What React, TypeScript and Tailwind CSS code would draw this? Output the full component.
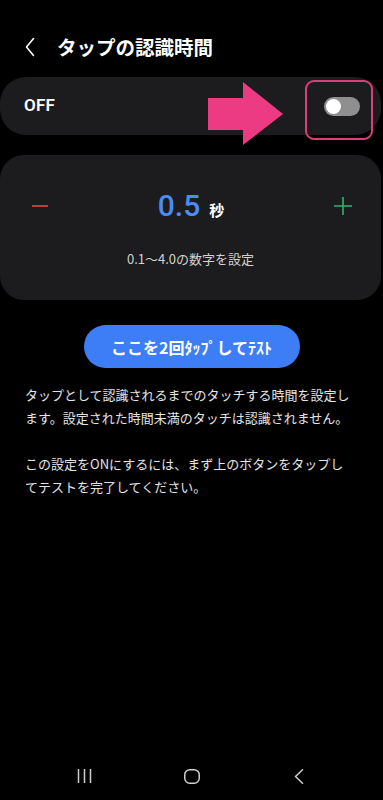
import React from 'react';

const Toggle: React.FC = () => (
  <div className="relative flex h-[19px] w-[36px] items-center rounded-full bg-[#8f8f8f] px-[2px]">
    <div className="h-[15px] w-[15px] rounded-full bg-white" />
  </div>
);

const PinkArrow: React.FC = () => (
  <svg width="76" height="64" viewBox="0 0 76 64" className="block">
    <polygon points="0,16 35,16 35,0 75,32 35,63 35,48 0,48" fill="#ec3a83" />
  </svg>
);

export default function App() {
  return (
    <div className="flex min-h-[800px] flex-col bg-black text-white font-['Noto_Sans_CJK_JP','Noto_Sans',sans-serif]">
      {/* header */}
      <div className="flex h-[28px] items-center gap-[22px] pl-[25px] mt-[33px]">
        <svg width="10" height="20" viewBox="0 0 10 20" fill="none">
          <path d="M8.5 1.5 L1.5 10 L8.5 18.5" stroke="#ffffff" strokeWidth="1.6" strokeLinecap="round" strokeLinejoin="round" />
        </svg>
        <h1 className="text-[19.5px] font-bold leading-none tracking-[0px]">タップの認識時間</h1>
      </div>

      {/* on/off row */}
      <div className="relative mr-[2px] mt-[16px] flex h-[58px] items-center justify-between rounded-[26px] bg-[#1c1c1e] pl-[24px] pr-[21px]">
        <span className="text-[17px] font-semibold font-['Roboto','Noto_Sans',sans-serif] tracking-[0.2px]">OFF</span>
        <Toggle />
        <div className="absolute left-[208px] top-[5px]">
          <PinkArrow />
        </div>
        <div className="absolute left-[305px] top-[3px] h-[60px] w-[68px] rounded-[9px] border-2 border-[#d9407b]" />
      </div>

      {/* value card */}
      <div className="mr-[2px] mt-[20px] flex h-[145px] flex-col rounded-[24px] bg-[#1c1c1e]">
        <div className="mt-[36px] flex h-[30px] items-center justify-between pl-[32px] pr-[29px]">
          <div className="h-[2px] w-[16px] bg-[#c23a42]" />
          <div className="flex items-baseline gap-[9px]">
            <span className="text-[30px] font-medium leading-none text-[#4b8cf2] font-['Roboto',sans-serif]">0.5</span>
            <span className="text-[15px] font-bold leading-none">秒</span>
          </div>
          <svg width="18" height="18" viewBox="0 0 18 18">
            <path d="M9 0 V18 M0 9 H18" stroke="#2fb46c" strokeWidth="1.6" />
          </svg>
        </div>
        <p className="mt-[29px] text-center text-[13px] leading-[18px] text-[#d2d2d2]">0.1〜4.0の数字を設定</p>
      </div>

      {/* test button */}
      <div className="mt-[25px] flex justify-center">
        <button className="h-[43px] w-[216px] rounded-full bg-[#3d7ef6] text-[16px] font-bold text-white">
          ここを2回ﾀｯﾌﾟしてﾃｽﾄ
        </button>
      </div>

      {/* description */}
      <div className="mt-[15px] px-[25px] text-[13px] leading-[23px] text-[#e4e4e4]">
        <p>
          タップとして認識されるまでのタッチする時間を設定し
          <br />
          ます。設定された時間未満のタッチは認識されません。
        </p>
        <p className="mt-[23px]">
          この設定をONにするには、まず上のボタンをタップし
          <br />
          てテストを完了してください。
        </p>
      </div>

      {/* navigation bar */}
      <div className="mt-auto flex h-[48px] items-center justify-center">
        <div className="flex w-[107px] justify-center">
          <svg width="15" height="14" viewBox="0 0 15 14">
            <path d="M1.5 0 V14 M7.5 0 V14 M13.5 0 V14" stroke="#cfcfcf" strokeWidth="1.5" />
          </svg>
        </div>
        <div className="flex w-[107px] justify-center">
          <svg width="16" height="15" viewBox="0 0 16 15" fill="none">
            <rect x="0.75" y="0.75" width="14.5" height="13.5" rx="5" stroke="#cfcfcf" strokeWidth="1.5" />
          </svg>
        </div>
        <div className="flex w-[107px] justify-center">
          <svg width="10" height="15" viewBox="0 0 10 15" fill="none">
            <path d="M8.5 0.8 L1.5 7.5 L8.5 14.2" stroke="#cfcfcf" strokeWidth="1.5" strokeLinecap="round" strokeLinejoin="round" />
          </svg>
        </div>
      </div>
    </div>
  );
}
